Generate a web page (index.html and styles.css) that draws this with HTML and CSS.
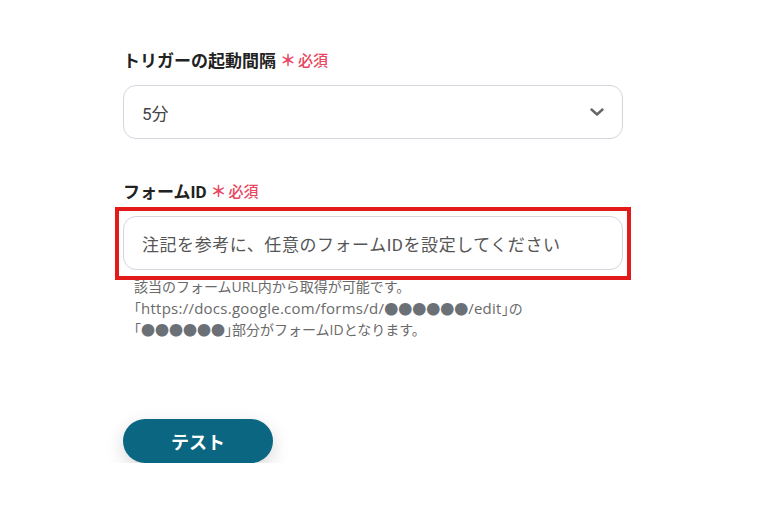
FILE: index.html
```html
<!DOCTYPE html>
<html lang="ja">
<head>
<meta charset="utf-8">
<link rel="stylesheet" href="styles.css">
</head>
<body>
<main class="form">
  <section class="field">
    <div class="label">トリガーの起動間隔<span class="req"><span class="star">＊</span>必須</span></div>
    <div class="select">
      <span class="value">5分</span>
      <svg class="chev" width="14" height="8" viewBox="0 0 14 8"><path d="M1.5 1.5 L7 6.5 L12.5 1.5" fill="none" stroke="#666" stroke-width="2.4" stroke-linecap="round" stroke-linejoin="round"/></svg>
    </div>
  </section>
  <section class="field field2">
    <div class="label">フォームID<span class="req"><span class="star">＊</span>必須</span></div>
    <div class="input-wrap highlighted">
      <div class="input">注記を参考に、任意のフォームIDを設定してください</div>
    </div>
    <div class="help">該当のフォームURL内から取得が可能です。<br><span class="halt">「</span><span class="url">https://docs.google.com/forms/d/</span><span class="dots">●●●●●●</span><span class="url">/edit</span><span class="halt">」</span>の<br><span class="halt">「</span><span class="dots">●●●●●●</span><span class="halt">」</span>部分がフォームIDとなります。</div>
  </section>
  <button class="btn">テスト</button>
</main>
</body>
</html>
```
FILE: styles.css
```css
* { box-sizing: border-box; }
html, body { margin: 0; padding: 0; background: #fff; }
body {
  font-family: Roboto, "Noto Sans CJK JP", "Noto Sans", sans-serif;
  color: #333;
}
.form {
  width: 500px;
  margin-left: 123px;
  padding-top: 49px;
  display: flex;
  flex-direction: column;
}
.field { display: flex; flex-direction: column; }
.field2 { margin-top: 41px; }
.label {
  font-size: 17px;
  line-height: 24px;
  font-weight: 700;
  color: #222;
  display: flex;
  align-items: center;
  margin-bottom: 12px;
}
.req {
  color: #e94560;
  font-size: 15px;
  font-weight: 500;
  margin-left: 4px;
  display: flex;
  align-items: center;
}
.star { font-size: 16px; font-weight: 700; margin-right: 2px; }
.select, .input {
  height: 54px;
  border: 1px solid #d3d7dd;
  border-radius: 13px;
  display: flex;
  align-items: center;
  padding: 0 18px;
  font-size: 17px;
  color: #444;
}
.select { justify-content: space-between; }
.input { color: #555; letter-spacing: 0.55px; }
.input-wrap { position: relative; }
.highlighted::after {
  content: "";
  position: absolute;
  left: -8px; right: -8px; top: -9px; bottom: -10px;
  border: 4px solid #e21a1a;
  pointer-events: none;
}
.help {
  margin-top: 7px;
  padding-left: 11px;
  font-family: "Open Sans", "Noto Sans CJK JP", sans-serif;
  font-size: 14px;
  line-height: 20.5px;
  color: #6a6a6a;
}
.url { font-size: 15px; letter-spacing: 0.25px; line-height: 1; }
.halt {
  font-family: "Noto Sans CJK JP", sans-serif;
  font-feature-settings: "halt";
}
.dots {
  font-family: "Noto Sans CJK JP", sans-serif;
  font-size: 14px;
  line-height: 1;
  color: #6b6f76;
}
.btn {
  margin-top: 78px;
  width: 150px;
  height: 44px;
  border: none;
  border-radius: 22px;
  background: #0b6781;
  color: #fff;
  font-family: inherit;
  font-size: 18px;
  font-weight: 700;
  box-shadow: 0 6px 18px rgba(0,0,0,0.16);
}
```
